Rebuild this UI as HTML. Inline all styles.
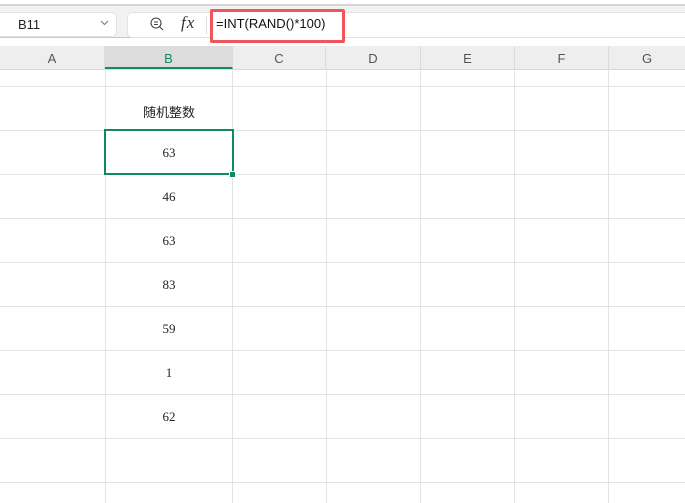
<!DOCTYPE html><html><head><meta charset="utf-8"><style>
*{margin:0;padding:0;box-sizing:border-box}
body{width:685px;height:503px;overflow:hidden;background:#fff;position:relative;font-family:"Liberation Sans","Noto Sans CJK SC",sans-serif}
.abs{position:absolute}
.vl{position:absolute;top:69px;bottom:0;width:1px;background:#e3e3e3}
.hl{position:absolute;left:0;right:0;height:1px;background:#e3e3e3}
.hd{position:absolute;top:46px;height:23px;background:#eeeeee;color:#555;font-size:13px;text-align:center;line-height:25px;border-right:1px solid #dcdcdc}
.n{position:absolute;left:105px;width:128px;text-align:center;font-family:"Liberation Serif",serif;font-size:13px;color:#222}
</style></head><body>
<div class="abs" style="left:0;top:0;width:685px;height:4px;background:#fff"></div>
<div class="abs" style="left:0;top:4px;width:685px;height:34px;background:#f2f2f2;border-top:2px solid #d4d4d6;border-bottom:1px solid #c8c8c8"></div>
<div class="abs" style="left:-4px;top:12px;width:121px;height:25px;background:#fff;border:1px solid #e2e2e2;border-radius:5px"></div>
<div class="abs" style="left:18px;top:17px;font-size:13px;color:#222">B11</div>
<svg class="abs" style="left:100px;top:20px" width="9" height="6"><path d="M1 1 L4.5 4.5 L8 1" fill="none" stroke="#777" stroke-width="1"/></svg>
<div class="abs" style="left:127px;top:12px;width:570px;height:26px;background:#fff;border:1px solid #e2e2e2;border-radius:5px"></div>
<svg class="abs" style="left:150px;top:17px" width="14" height="14"><circle cx="6" cy="6" r="5" fill="none" stroke="#444" stroke-width="1.1"/><path d="M4 5H8M4 7.5H8M9.5 9.5L13 13" stroke="#444" stroke-width="1.1"/></svg>
<div class="abs" style="left:181px;top:13px;font-family:'Liberation Serif',serif;font-style:italic;font-size:17px;color:#333;letter-spacing:1px">fx</div>
<div class="abs" style="left:206px;top:16px;width:1px;height:18px;background:#ddd"></div>
<div class="abs" style="left:210px;top:9px;width:135px;height:34px;border:3px solid #f0555a;border-radius:2px;background:#fff"></div>
<div class="abs" style="left:216px;top:16px;font-size:13px;color:#111">=INT(RAND()*100)</div>
<div class="hd" style="left:0;width:105px">A</div>
<div class="hd" style="left:105px;width:128px;background:#dcdcdc;color:#108a5e;border-bottom:2px solid #108a5e">B</div>
<div class="hd" style="left:233px;width:93px">C</div>
<div class="hd" style="left:326px;width:95px">D</div>
<div class="hd" style="left:421px;width:94px">E</div>
<div class="hd" style="left:515px;width:94px">F</div>
<div class="hd" style="left:609px;width:76px;border-right:0">G</div>
<div class="hl" style="top:69px;background:#d8d8d8"></div>
<div class="hl" style="top:86px"></div><div class="hl" style="top:130px"></div><div class="hl" style="top:174px"></div><div class="hl" style="top:218px"></div><div class="hl" style="top:262px"></div><div class="hl" style="top:306px"></div><div class="hl" style="top:350px"></div><div class="hl" style="top:394px"></div><div class="hl" style="top:438px"></div><div class="hl" style="top:482px"></div>
<div class="vl" style="left:105px"></div><div class="vl" style="left:232px"></div><div class="vl" style="left:326px"></div><div class="vl" style="left:420px"></div><div class="vl" style="left:514px"></div><div class="vl" style="left:608px"></div>
<div class="abs" style="left:105px;top:102px;width:128px;text-align:center;font-size:13px;color:#222">随机整数</div>
<div class="n" style="top:145px">63</div>
<div class="n" style="top:189px">46</div>
<div class="n" style="top:233px">63</div>
<div class="n" style="top:277px">83</div>
<div class="n" style="top:321px">59</div>
<div class="n" style="top:365px">1</div>
<div class="n" style="top:409px">62</div>
<div class="abs" style="left:104px;top:129px;width:130px;height:46px;border:2px solid #108a5e"></div>
<div class="abs" style="left:229px;top:171px;width:7px;height:7px;background:#108a5e;border:1px solid #fff"></div>
</body></html>
